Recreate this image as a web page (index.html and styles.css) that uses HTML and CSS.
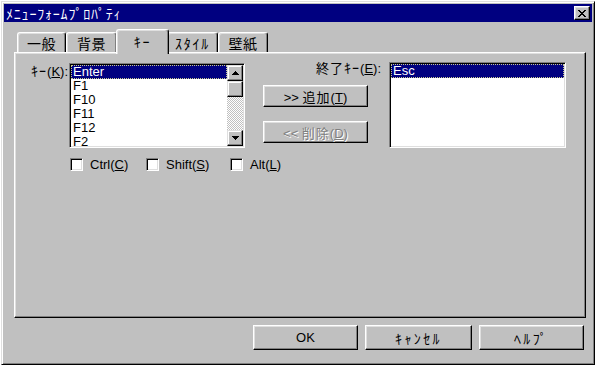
FILE: index.html
```html
<!DOCTYPE html>
<html lang="ja">
<head>
<meta charset="utf-8">
<title>ﾒﾆｭｰﾌｫｰﾑﾌﾟﾛﾊﾟﾃｨ</title>
<link rel="stylesheet" href="styles.css">
</head>
<body>
<div class="window">
  <div class="titlebar">
    <span class="title">ﾒﾆｭｰﾌｫｰﾑﾌﾟﾛﾊﾟﾃｨ</span>
    <span class="close"><svg width="8" height="7" viewBox="0 0 8 7"><path d="M0 0h2v1h1v1h2V1h1V0h2v1H7v1H6v1H5v1h1v1h1v1h1v1H6V6H5V5H3v1H2v1H0V6h1V5h1V4h1V3H2V2H1V1H0z" fill="#000"/></svg></span>
  </div>
  <div class="client">
    <div class="tabs">
      <div class="tab t1"><span class="fw">一般</span></div>
      <div class="tab t2"><span class="fw">背景</span></div>
      <div class="tab t3 active"><span class="hk">ｷｰ</span></div>
      <div class="tab t4"><span class="hk">ｽﾀｲﾙ</span></div>
      <div class="tab t5"><span class="fw">壁紙</span></div>
    </div>
    <div class="panel">
      <div class="keyrow">
        <div class="leftcol">
          <div class="listrow">
            <div class="lbl1"><span class="hk">ｷｰ</span>(<u>K</u>):</div>
            <div class="listbox list1">
              <div class="items">
                <div class="item sel">Enter</div>
                <div class="item">F1</div>
                <div class="item">F10</div>
                <div class="item">F11</div>
                <div class="item">F12</div>
                <div class="item">F2</div>
              </div>
              <div class="vscroll">
                <div class="sbtn"><svg width="7" height="4" viewBox="0 0 7 4"><path d="M3 0h1v1h1v1h1v1h1v1H0V3h1V2h1V1h1z" fill="#000"/></svg></div>
                <div class="thumb"></div>
                <div class="track"></div>
                <div class="sbtn"><svg width="7" height="4" viewBox="0 0 7 4"><path d="M0 0h7v1H6v1H5v1H4v1H3V3H2V2H1V1H0z" fill="#000"/></svg></div>
              </div>
            </div>
          </div>
          <div class="checks">
            <div class="check c1"><span class="box"></span><span>Ctrl(<u>C</u>)</span></div>
            <div class="check c2"><span class="box"></span><span>Shift(<u>S</u>)</span></div>
            <div class="check c3"><span class="box"></span><span>Alt(<u>L</u>)</span></div>
          </div>
        </div>
        <div class="midcol">
          <div class="lbl2"><span class="fw">終了</span><span class="hk">ｷｰ</span>(<u>E</u>):</div>
          <div class="btn small add"><span>&gt;&gt; <span class="fw">追加</span>(<u>T</u>)</span></div>
          <div class="btn small del disabled"><span>&lt;&lt; <span class="fw">削除</span>(<u>D</u>)</span></div>
        </div>
        <div class="listbox list2">
          <div class="items">
            <div class="item sel">Esc</div>
          </div>
        </div>
      </div>
    </div>
    <div class="footer">
      <div class="btn big b-ok"><span>OK</span></div>
      <div class="btn big b-cancel"><span class="hk">ｷｬﾝｾﾙ</span></div>
      <div class="btn big b-help"><span class="hk">ﾍﾙﾌﾟ</span></div>
    </div>
  </div>
</div>
</body>
</html>
```

FILE: styles.css
```css
* { box-sizing: border-box; }

html, body {
  margin: 0;
  padding: 0;
  background: #ffffff;
}

body {
  font-family: "Liberation Sans", "Noto Sans CJK JP", sans-serif;
  font-size: 13px;
  color: #000;
}

u { text-decoration: underline; text-underline-offset: 1px; }

.hk { font-family: "Noto Sans CJK JP", sans-serif; font-size: 14px; letter-spacing: 1.6px; }
.fw { font-family: "Noto Sans CJK JP", sans-serif; font-size: 13px; letter-spacing: 1px; }

.window {
  margin: 1px 0 0 1px;
  width: 594px;
  height: 364px;
  background: #c0c0c0;
  border: 1px solid;
  border-color: #dfdfdf #000 #000 #dfdfdf;
  box-shadow: inset 1px 1px #fff, inset -1px -1px #808080;
  padding: 2px;
  display: flex;
  flex-direction: column;
}

.titlebar {
  height: 18px;
  background: #000080;
  color: #fff;
  display: flex;
  align-items: center;
  justify-content: space-between;
  padding: 0 2px 0 2px;
}

.title {
  font-family: "Noto Sans CJK JP", sans-serif;
  font-size: 14px;
  letter-spacing: 0.8px;
  line-height: 18px;
}

.close {
  width: 16px;
  height: 14px;
  background: #c0c0c0;
  border: 1px solid;
  border-color: #fff #000 #000 #fff;
  box-shadow: inset -1px -1px #808080, inset 1px 1px #dfdfdf;
  display: flex;
  align-items: center;
  justify-content: center;
}

.client {
  flex: 1;
  padding: 7px 6px 0 10px;
  display: flex;
  flex-direction: column;
}

.tabs {
  height: 23px;
  display: flex;
  align-items: flex-end;
  padding-left: 3px;
}

.tab {
  height: 20px;
  background: #c0c0c0;
  border-top: 1px solid #fff;
  border-left: 1px solid #fff;
  border-right: 1px solid #000;
  border-radius: 3px 3px 0 0;
  box-shadow: inset -1px 0 #808080, inset 1px 1px #dfdfdf;
  display: flex;
  align-items: center;
  justify-content: center;
  line-height: 14px;
}

.tab .fw { font-size: 14px; letter-spacing: 0.5px; }
.tab .hk { font-size: 14px; letter-spacing: 1.8px; }

.t1 { width: 49px; }
.t2 { width: 51px; }
.t3 { width: 53px; }
.t4 { width: 51px; }
.t5 { width: 50px; }

.tab.active {
  height: 25px;
  margin: 0 -2px -2px -1px;
  position: relative;
  z-index: 2;
  padding-bottom: 3px;
}

.panel {
  height: 266px;
  border: 1px solid;
  border-color: #fff #000 #000 #fff;
  box-shadow: inset -1px -1px #808080, inset 1px 1px #dfdfdf;
  padding: 9px 0 0 12px;
}

.keyrow {
  display: flex;
  align-items: flex-start;
}

.leftcol {
  width: 218px;
  flex: none;
  display: flex;
  flex-direction: column;
}

.listrow {
  display: flex;
  align-items: flex-start;
}

.lbl1 {
  width: 42px;
  text-align: right;
  padding-right: 1px;
  line-height: 14px;
  margin-top: 1px;
  white-space: nowrap;
}

.lbl1 .hk { letter-spacing: 1px; }

.listbox {
  background: #fff;
  border: 1px solid;
  border-color: #808080 #fff #fff #808080;
  box-shadow: inset 1px 1px #000, inset -1px -1px #dfdfdf;
  padding: 1px;
  display: flex;
}

.list1 {
  width: 176px;
  height: 85px;
  margin-top: 1px;
  flex: none;
}

.items {
  flex: 1;
  overflow: hidden;
}

.item {
  height: 14px;
  line-height: 14px;
  padding-left: 2px;
  white-space: nowrap;
}

.item.sel {
  background: #000080;
  color: #fff;
  border: 1px dotted #c8c890;
  line-height: 12px;
  padding-left: 1px;
}

.vscroll {
  width: 16px;
  display: flex;
  flex-direction: column;
}

.sbtn, .thumb {
  width: 16px;
  height: 16px;
  background: #c0c0c0;
  border: 1px solid;
  border-color: #dfdfdf #000 #000 #dfdfdf;
  box-shadow: inset -1px -1px #808080, inset 1px 1px #fff;
  display: flex;
  align-items: center;
  justify-content: center;
}

.track {
  flex: 1;
  background: repeating-conic-gradient(#fff 0 25%, #c0c0c0 0 50%) 0 0 / 2px 2px;
}

.checks {
  display: flex;
  align-items: center;
  margin-top: 10px;
  padding-left: 43px;
  height: 13px;
}

.check {
  display: flex;
  align-items: center;
  white-space: nowrap;
  line-height: 13px;
  flex: none;
}

.c1 { width: 76px; }
.c2 { width: 84px; }

.box {
  width: 13px;
  height: 13px;
  margin-right: 7px;
  background: #fff;
  border: 1px solid;
  border-color: #808080 #fff #fff #808080;
  box-shadow: inset 1px 1px #000, inset -1px -1px #dfdfdf;
  flex: none;
}

.midcol {
  width: 118px;
  flex: none;
  margin-left: 18px;
  display: flex;
  flex-direction: column;
  align-items: flex-start;
}

.lbl2 {
  align-self: stretch;
  text-align: right;
  line-height: 14px;
  margin-top: -2px;
  white-space: nowrap;
}

.lbl2 .hk { letter-spacing: 1px; }

.btn {
  background: #c0c0c0;
  border: 1px solid;
  border-color: #fff #000 #000 #fff;
  box-shadow: inset -1px -1px #808080, inset 1px 1px #dfdfdf;
  display: flex;
  align-items: center;
  justify-content: center;
  white-space: nowrap;
}

.btn.small {
  width: 105px;
  height: 22px;
}

.add { margin-top: 9px; }
.del { margin-top: 14px; }

.disabled {
  color: #808080;
  text-shadow: 1px 1px #fff;
}

.list2 {
  width: 177px;
  height: 86px;
  margin-left: 8px;
  flex: none;
}

.footer {
  display: flex;
  justify-content: flex-end;
  gap: 7px;
  margin-top: 7px;
  padding-right: 2px;
}

.btn.big {
  height: 25px;
  width: 105px;
}

.btn.b-cancel { width: 107px; }
.footer .hk { letter-spacing: 2.4px; }
```
